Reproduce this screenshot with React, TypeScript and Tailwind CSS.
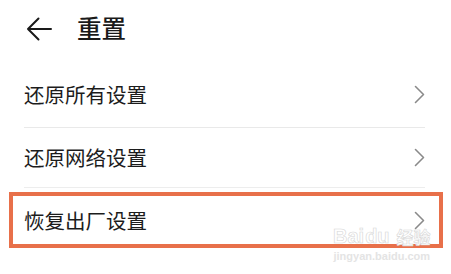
import React from "react";

const cjk = { fontFamily: '"Noto Sans CJK SC", "Noto Sans", sans-serif' };

function Chevron() {
  return (
    <svg width="11" height="19" viewBox="0 0 11 19" className="shrink-0">
      <path d="M1.5 1.5 L9.5 9.5 L1.5 17.5" fill="none" stroke="#8a8a8a" strokeWidth="1.6" strokeLinecap="round" strokeLinejoin="round" />
    </svg>
  );
}

function Row({ label, h }: { label: string; h: string }) {
  return (
    <div className={`flex items-center justify-between ${h}`}>
      <span className="text-[20.5px] text-[#1c1c1c] leading-none" style={cjk}>{label}</span>
      <Chevron />
    </div>
  );
}

export default function App() {
  return (
    <div className="relative w-[451px] h-[274px] bg-white overflow-hidden" style={cjk}>
      <div className="flex items-center h-[57px] pl-[26px]">
        <svg width="26" height="24" viewBox="0 0 26 24" className="shrink-0">
          <path d="M25 12 H2 M12.5 1.5 L2 12 L12.5 22.5" fill="none" stroke="#1a1a1a" strokeWidth="2" strokeLinecap="round" strokeLinejoin="round" />
        </svg>
        <span className="ml-[25px] text-[24.5px] font-medium text-[#1a1a1a] leading-none">重置</span>
      </div>
      <div className="pl-[24px] pr-[26px]">
        <Row label="还原所有设置" h="h-[70px] pt-[5px]" />
        <div className="h-px bg-[#e9e9e9]" />
        <Row label="还原网络设置" h="h-[59px]" />
        <div className="h-px bg-[#ededed]" />
      </div>
      <div className="mt-[4px] ml-[9px] w-[434px] h-[56px] border-[4px] border-[#e8704a] flex items-center justify-between pl-[11px] pr-[14px]">
        <span className="text-[20.5px] text-[#1c1c1c] leading-none">恢复出厂设置</span>
        <Chevron />
      </div>
      <div className="absolute left-[333px] top-[226px] flex flex-col items-center pointer-events-none" style={{ fontFamily: '"Liberation Sans", sans-serif' }}>
        <div className="flex items-center text-[20px] font-bold leading-none text-white" style={{ WebkitTextStroke: "0.6px #d6d6d6" }}>
          <span>Bai</span>
          <span className="mx-[1px]">du</span>
          <span className="ml-[6px] text-[17px]" style={cjk}>经验</span>
        </div>
        <div className="mt-[5px] text-[11px] leading-none text-[#e4e4e4] font-bold">jingyan.baidu.com</div>
      </div>
    </div>
  );
}
